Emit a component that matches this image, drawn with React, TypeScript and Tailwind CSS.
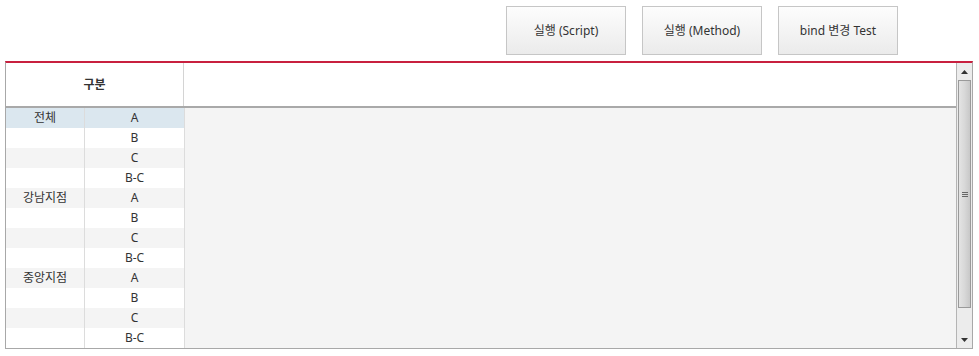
const ROWS = [
  { group: '전체', code: 'A' },
  { group: '', code: 'B' },
  { group: '', code: 'C' },
  { group: '', code: 'B-C' },
  { group: '강남지점', code: 'A' },
  { group: '', code: 'B' },
  { group: '', code: 'C' },
  { group: '', code: 'B-C' },
  { group: '중앙지점', code: 'A' },
  { group: '', code: 'B' },
  { group: '', code: 'C' },
  { group: '', code: 'B-C' },
]

const BUTTONS = ['실행 (Script)', '실행 (Method)', 'bind 변경 Test']

function ScrollBar() {
  return (
    <div className="w-[16px] flex flex-col bg-[#ececec] border-l border-[#b4b4b4]">
      {/* up arrow */}
      <div className="h-[17px] flex items-center justify-center">
        <svg width="7" height="4" viewBox="0 0 7 4">
          <path d="M3.5 0L7 4H0z" fill="#333" />
        </svg>
      </div>
      {/* thumb */}
      <div className="mx-[1px] h-[228px] border border-[#9a9a9a] bg-gradient-to-r from-[#e4e4e4] via-[#d8d8d8] to-[#c8c8c8] flex flex-col items-center justify-center gap-[1px]">
        <div className="w-[6px] h-[1px] bg-[#666]" />
        <div className="w-[6px] h-[1px] bg-[#666]" />
        <div className="w-[6px] h-[1px] bg-[#666]" />
      </div>
      <div className="flex-1 flex items-end justify-center pb-[6px]">
        <svg width="7" height="4" viewBox="0 0 7 4">
          <path d="M0 0H7L3.5 4z" fill="#333" />
        </svg>
      </div>
    </div>
  )
}

export default function App() {
  return (
    <div
      className="w-[979px] h-[356px] bg-white text-[12px] text-[#333] overflow-hidden"
      style={{ fontFamily: '"Noto Sans", "Noto Sans CJK KR", sans-serif' }}
    >
      {/* Toolbar */}
      <div className="flex justify-end gap-[16px] pt-[6px] pr-[81px]">
        {BUTTONS.map((label) => (
          <button
            key={label}
            className="w-[120px] h-[49px] border border-[#c6c6c6] bg-gradient-to-b from-[#fdfdfd] to-[#ebebeb] text-[12px] text-[#333]"
          >
            {label}
          </button>
        ))}
      </div>

      {/* Grid */}
      <div className="mt-[6px] ml-[5px] w-[968px] h-[288px] border-t-2 border-t-[#c8203f] border-x border-b border-[#a8a8a8] flex">
        <div className="flex-1 flex flex-col">
          {/* Header */}
          <div className="h-[45px] flex border-b-2 border-[#a9a9a9] bg-white">
            <div className="w-[178px] flex items-center justify-center font-bold border-r border-[#d4d4d4]">
              구분
            </div>
            <div className="flex-1" />
          </div>
          {/* Body */}
          <div className="flex-1 flex bg-[#f4f4f4]">
            <div className="w-[179px] flex flex-col">
              {ROWS.map((r, i) => {
                const bg = i === 0 ? 'bg-[#dbe7ef]' : i % 2 === 0 ? 'bg-[#f4f4f4]' : 'bg-white'
                return (
                  <div key={i} className={`h-[20px] flex ${bg}`}>
                    <div className="w-[79px] flex items-center justify-center border-r border-[#dcdcdc] leading-none">
                      {r.group}
                    </div>
                    <div className="w-[100px] flex items-center justify-center border-r border-[#dcdcdc] leading-none">
                      {r.code}
                    </div>
                  </div>
                )
              })}
            </div>
            <div className="flex-1" />
          </div>
        </div>
        <ScrollBar />
      </div>
    </div>
  )
}
